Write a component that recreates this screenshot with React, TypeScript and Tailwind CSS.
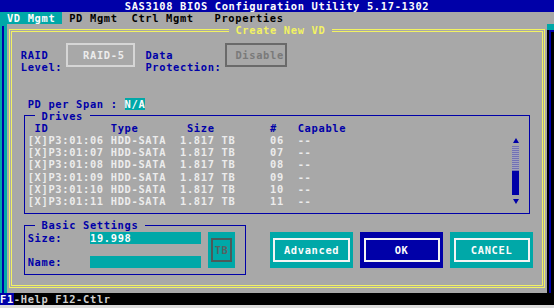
import type { ReactNode } from "react";

// 80x25 text screen on 554x308: one column = 6.925px, one row = 12.2px
const NAVY = "text-[#0000a8]";

type CellBoxProps = {
  w: string;
  outer?: string;
  line: string;
  align?: string;
  children?: ReactNode;
};

// box whose frame runs through the middle of its edge cells, like the BIOS box glyphs
function CellBox({ w, outer = "", line, align = "justify-center", children }: CellBoxProps) {
  return (
    <div className={`${w} ${outer} h-[36.6px] shrink-0 px-[3.4625px] py-[6.1px]`}>
      <div className={`flex h-full w-full items-center whitespace-pre ${align} ${line}`}>{children}</div>
    </div>
  );
}

const drives = ["06", "07", "08", "09", "10", "11"];

function Scrollbar() {
  return (
    <div className="flex w-[6.925px] shrink-0 flex-col">
      <div className="flex h-[12.2px] items-center justify-center">
        <svg width="6" height="5" viewBox="0 0 6 5">
          <polygon points="3,0 6,5 0,5" fill="#0000a8" />
        </svg>
      </div>
      <div className="h-[24.4px] bg-[repeating-linear-gradient(to_bottom,#7272b4_0px,#7272b4_1px,#a4a4bc_1px,#a4a4bc_2px)]" />
      <div className="h-[24.4px] bg-[#0000a8]" />
      <div className="flex h-[12.2px] items-center justify-center">
        <svg width="6" height="5" viewBox="0 0 6 5">
          <polygon points="0,0 6,0 3,5" fill="#0000a8" />
        </svg>
      </div>
    </div>
  );
}

function Drives() {
  return (
    <fieldset className={`mx-[9.8875px] mb-[5.6px] border border-[#0000a8] px-[2.9625px] pb-[5.6px] ${NAVY}`}>
      <legend className="ml-[6.925px] h-[12.2px] whitespace-pre"> Drives </legend>
      <div className="flex h-[12.2px] whitespace-pre">
        <span className="w-[83.1px] shrink-0 pl-[6.925px]">ID</span>
        <span className="w-[69.25px] shrink-0">Type</span>
        <span className="w-[90.025px] shrink-0 pl-[6.925px]">Size</span>
        <span className="w-[27.7px] shrink-0">#</span>
        <span>Capable</span>
      </div>
      <div className="flex">
        <div className="w-[484.75px] shrink-0 text-[#ececec]">
          {drives.map((n) => (
            <div key={n} className="flex h-[12.2px] whitespace-pre">
              <span className="w-[83.1px] shrink-0">[X]P3:01:{n}</span>
              <span className="w-[69.25px] shrink-0">HDD-SATA</span>
              <span className="w-[90.025px] shrink-0">1.817 TB</span>
              <span className="w-[27.7px] shrink-0">{n}</span>
              <span>--</span>
            </div>
          ))}
        </div>
        <Scrollbar />
      </div>
    </fieldset>
  );
}

function BasicSettings() {
  return (
    <fieldset className={`ml-[9.8875px] w-[222.6px] shrink-0 self-start border border-[#0000a8] px-[2.9625px] pb-[5.6px] ${NAVY}`}>
      <legend className="ml-[6.925px] h-[12.2px] whitespace-pre"> Basic Settings </legend>
      <div className="flex">
        <div className="w-[173.125px] shrink-0">
          <div className="flex h-[12.2px]">
            <span className="w-[62.325px] shrink-0">Size:</span>
            <span className="w-[110.8px] shrink-0 bg-[#00a8a8] text-[#fcfcfc]">19.998</span>
          </div>
          <div className="h-[12.2px]" />
          <div className="flex h-[12.2px]">
            <span className="w-[62.325px] shrink-0">Name:</span>
            <span className="w-[110.8px] shrink-0 bg-[#00a8a8]" />
          </div>
        </div>
        <div className="w-[6.925px] shrink-0" />
        <CellBox w="w-[27.7px]" outer="bg-[#00a8a8]" line="border-2 border-[#4a5a5a] text-[#566262]">
          TB
        </CellBox>
      </div>
    </fieldset>
  );
}

function Dialog() {
  return (
    <div className="w-[540.15px] shrink-0 bg-[#a8a8a8]">
      <fieldset className="mx-[1.9625px] mb-[4.6px] border-[3px] border-double border-[#f2f262] px-[1.9625px] pb-[4.6px]">
        <legend className="ml-[214.675px] h-[12.2px] whitespace-pre text-[#f2f262]"> Create New VD </legend>

        <div className="flex h-[36.6px] pl-[6.925px]">
          <div className={`w-[41.55px] shrink-0 pt-[12.2px] ${NAVY}`}>
            <div className="h-[12.2px]">RAID</div>
            <div className="h-[12.2px]">Level:</div>
          </div>
          <CellBox
            w="w-[76.175px]"
            line="border-2 border-[#d6d6d6] pl-[15.3125px] text-[#ececec]"
            align="justify-start"
          >
            RAID-5
          </CellBox>
          <div className="w-[6.925px] shrink-0" />
          <div className={`w-[76.175px] shrink-0 pt-[12.2px] ${NAVY}`}>
            <div className="h-[12.2px]">Data</div>
            <div className="h-[12.2px]">Protection:</div>
          </div>
          <CellBox
            w="w-[69.25px]"
            line="border-2 border-[#6a6a6a] pl-[8.3875px] text-[#7a7a7a]"
            align="justify-start"
          >
            Disable
          </CellBox>
        </div>

        <div className="h-[24.4px]" />

        <div className={`h-[12.2px] whitespace-pre pl-[13.85px] ${NAVY}`}>
          PD per Span : <span className="bg-[#00a8a8] text-[#fcfcfc]">N/A</span>
        </div>

        <Drives />

        <div className="flex h-[61px]">
          <BasicSettings />
          <div className="w-[23.7375px] shrink-0" />
          <div className="flex pt-[12.2px]">
            <CellBox w="w-[83.1px]" outer="bg-[#00a8a8]" line="border-2 border-[#f4f4f4] text-[#fcfcfc]">
              Advanced
            </CellBox>
            <div className="w-[6.925px] shrink-0" />
            <CellBox w="w-[83.1px]" outer="bg-[#0000a8]" line="border-2 border-[#f4f4f4] text-[#fcfcfc]">
              OK
            </CellBox>
            <div className="w-[6.925px] shrink-0" />
            <CellBox w="w-[83.1px]" outer="bg-[#00a8a8]" line="border-2 border-[#f4f4f4] text-[#fcfcfc]">
              CANCEL
            </CellBox>
          </div>
        </div>
      </fieldset>
    </div>
  );
}

export default function App() {
  return (
    <div className="flex h-[308px] w-[554px] flex-col overflow-hidden bg-[#dcdcdc] font-['DejaVu_Sans_Mono','Liberation_Mono',monospace] text-[10.4px] font-bold leading-[12.2px] tracking-[0.664px]">
      <div className="flex h-[12.2px] shrink-0 justify-center whitespace-pre bg-[#0000a8] text-[#fcfcfc]">
        SAS3108 BIOS Configuration Utility 5.17-1302
      </div>

      <div className="flex h-[12.2px] shrink-0 whitespace-pre bg-[#a8a8a8] text-black">
        <span className="bg-[#00a8a8] text-[#fcfcfc]"> VD Mgmt </span>
        <span> PD Mgmt  Ctrl Mgmt   Properties</span>
      </div>

      <div className="flex h-[268.4px] shrink-0">
        <div className="w-[6.925px] shrink-0 bg-[#00a8a8] pl-[2px] pt-[2px]">
          <div className="h-full w-[2px] bg-[#0000a8]" />
        </div>
        <Dialog />
        <div className="flex w-[6.925px] shrink-0 flex-col bg-black">
          <div className="h-[6px] bg-[#00a8a8]" />
          <div className="ml-[2px] flex-1 border-l-2 border-t-2 border-[#0000a8]" />
        </div>
      </div>

      <div className="flex h-[12.2px] shrink-0 whitespace-pre bg-black text-[#cfcfcf]">
        <span className="bg-[#0000a8] text-[#fcfcfc]">F1</span>
        <span>-Help F12-Ctlr</span>
      </div>
      <div className="flex-1 bg-[#dcdcdc]" />
    </div>
  );
}
